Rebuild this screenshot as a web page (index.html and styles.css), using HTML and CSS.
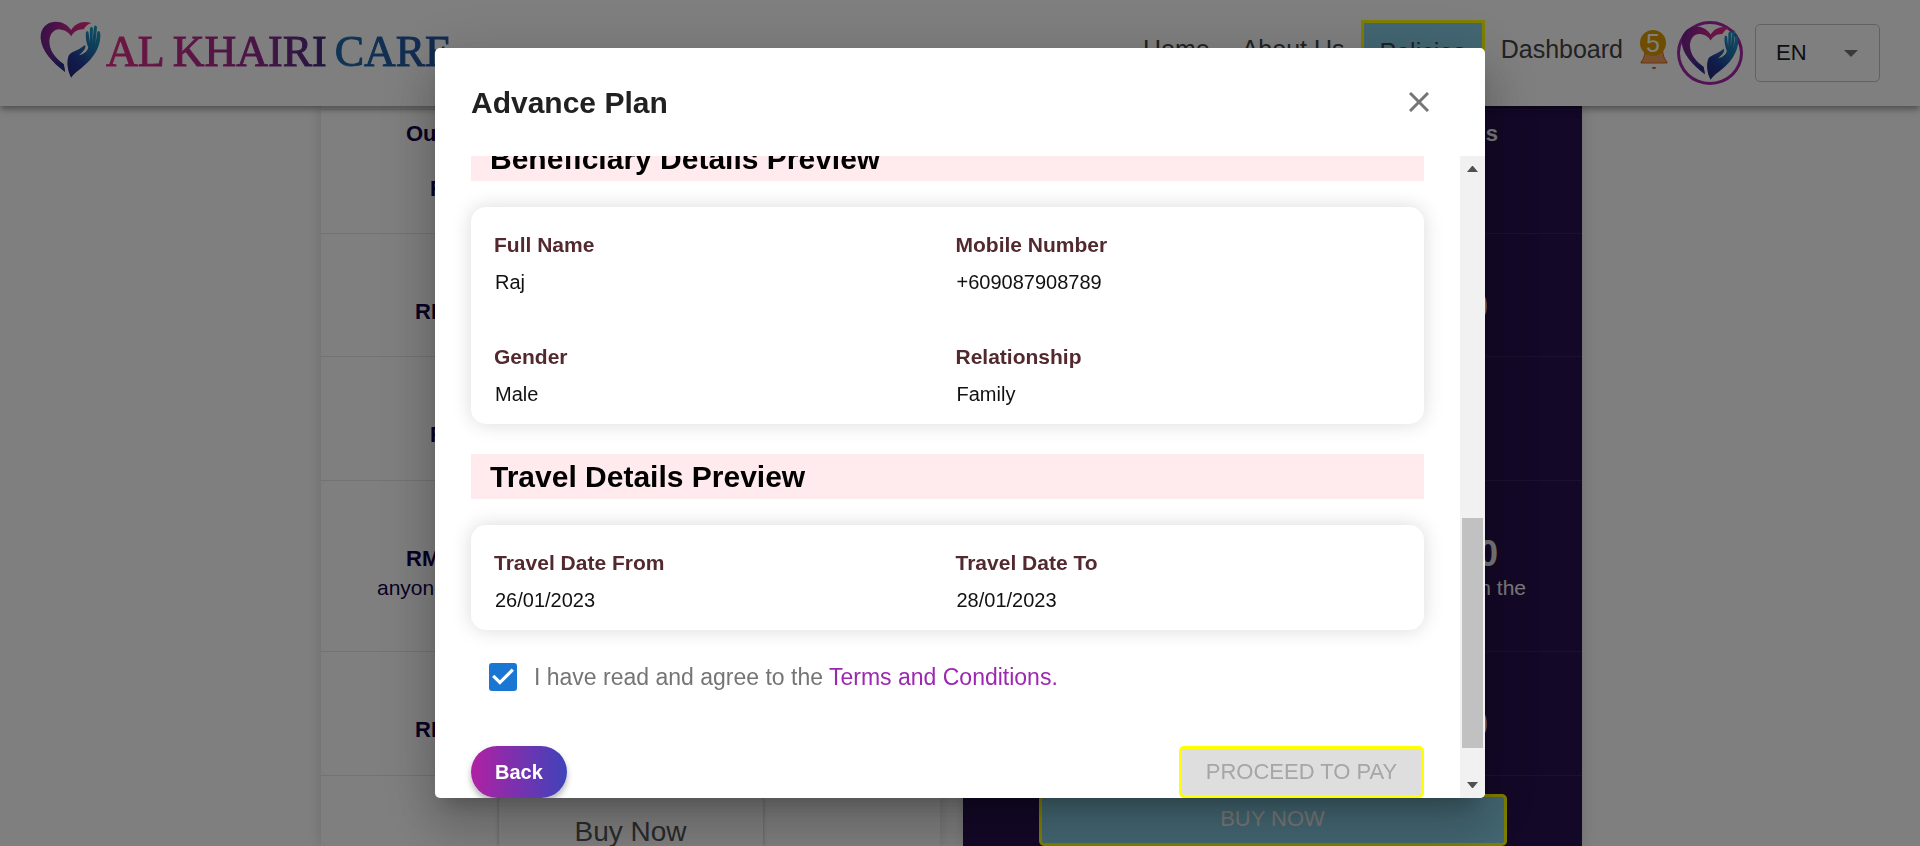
FILE: index.html
```html
<!DOCTYPE html>
<html lang="en">
<head>
<meta charset="utf-8">
<title>Al Khairi Care</title>
<link rel="stylesheet" href="styles.css">
</head>
<body>
<svg class="sprite" aria-hidden="true">
  <defs>
    <linearGradient id="heartFill" x1="0" y1="0.2" x2="1" y2="0.5">
      <stop offset="0" stop-color="#6a2390"/>
      <stop offset="0.35" stop-color="#b02590"/>
      <stop offset="0.8" stop-color="#e62a86"/>
    </linearGradient>
    <linearGradient id="heartLow" x1="0" y1="0" x2="0.4" y2="1">
      <stop offset="0.3" stop-color="#3a2a8c" stop-opacity="0"/>
      <stop offset="1" stop-color="#25308c"/>
    </linearGradient>
    <linearGradient id="handFill" x1="0.8" y1="0" x2="0.2" y2="1">
      <stop offset="0" stop-color="#1b9cc4"/>
      <stop offset="0.4" stop-color="#1f6fae"/>
      <stop offset="0.7" stop-color="#233a98"/>
      <stop offset="1" stop-color="#232a7c"/>
    </linearGradient>
    <symbol id="heart" viewBox="30 19 182 170">
      <path fill="url(#heartFill)" d="M123 46C112 29 94 20 75 21C48 22 30 43 32 71C35 108 65 140 105 171L101 148C72 128 57 104 58 78C60 55 73 43 89 44C105 45 117 53 123 65C130 52 142 43 160 44C166 34 174 27 184 26C160 16 135 25 123 46Z"/>
      <path fill="url(#heartLow)" d="M32 71C35 108 65 140 105 171L101 148C72 128 57 104 58 78C50 90 42 60 60 25C42 30 30 50 32 71Z"/>
      <path fill="url(#handFill)" d="M123 188C112 168 108 140 116 121C123 110 147 106 162 92C166 90 167 96 164 102C160 110 152 115 147 121C161 118 172 109 174 98C169 86 165 68 167 53C168 48 174 49 175 54L178 84L179 42C180 35 187 35 188 42L186 84L191 36C193 30 200 32 200 39L195 88L201 52C203 46 210 48 210 58C212 105 180 139 149 163C138 171 130 178 123 188Z"/>
    </symbol>
  </defs>
</svg>

<header class="topbar">
  <a class="brand" href="#">
    <svg class="brand-mark" aria-hidden="true"><use href="#heart"/></svg>
    <span class="brand-name">
      <span class="word word-al">AL</span>
      <span class="word word-khairi">KHAIRI</span>
      <span class="word word-care">CARE</span>
    </span>
  </a>
  <nav class="nav">
    <a href="#">Home</a>
    <a href="#">About Us</a>
    <a href="#" class="active">Policies</a>
    <a href="#">Dashboard</a>
  </nav>
  <button class="bell" type="button" aria-label="Notifications">
    <svg viewBox="0 0 28 40" aria-hidden="true">
      <path d="M5 16H22C23 24 23 27 27 32V33H1V32C5 27 5 24 5 16Z" fill="#f0a05c" stroke="#d9651c"/>
      <path d="M12 37H16C16 40 12 40 12 37Z" fill="#d9651c"/>
    </svg>
    <span class="badge">5</span>
  </button>
  <a class="avatar" href="#" aria-label="Profile"><svg aria-hidden="true"><use href="#heart"/></svg></a>
  <div class="lang">
    <select aria-label="Language"><option>EN</option></select>
    <svg class="caret" viewBox="0 0 14 7" aria-hidden="true"><path d="M0 0H14L7 7Z"/></svg>
  </div>
</header>

<main class="plans">
  <section class="plan plan-light">
    <div class="row row-first"><p class="name indent-m">Ou</p><p class="name indent-l">R</p></div>
    <div class="row row-short"><p class="name indent-n">RM</p></div>
    <div class="row"><p class="name indent-l">R</p></div>
    <div class="row row-tall"><p class="name indent-m">RM</p><p class="note indent-s">anyone</p></div>
    <div class="row"><p class="name indent-n">RM</p></div>
    <div class="row row-action"><button class="buy-light" type="button">Buy Now</button></div>
  </section>
  <section class="plan plan-dark">
    <div class="row row-first"><p class="name end-m">s</p></div>
    <div class="row row-short"><p class="price end-l">0</p></div>
    <div class="row"></div>
    <div class="row row-tall"><p class="price end-m">0</p><p class="note end-s">on the</p></div>
    <div class="row"><p class="price end-l">0</p></div>
    <div class="row row-action"><button class="buy-dark" type="button">BUY NOW</button></div>
  </section>
</main>

<div class="backdrop">
  <div class="dialog" role="dialog" aria-modal="true" aria-labelledby="dialog-title">
    <div class="dialog-head">
      <h2 id="dialog-title">Advance Plan</h2>
      <button class="close" type="button" aria-label="Close">
        <svg viewBox="0 0 20 20" aria-hidden="true"><path d="M1 1L19 19M19 1L1 19"/></svg>
      </button>
    </div>
    <div class="dialog-body">
      <div class="scroll">
        <h3 class="band">Beneficiary Details Preview</h3>
        <dl class="card">
          <div><dt>Full Name</dt><dd>Raj</dd></div>
          <div><dt>Mobile Number</dt><dd>+609087908789</dd></div>
          <div><dt>Gender</dt><dd>Male</dd></div>
          <div><dt>Relationship</dt><dd>Family</dd></div>
        </dl>
        <h3 class="band">Travel Details Preview</h3>
        <dl class="card">
          <div><dt>Travel Date From</dt><dd>26/01/2023</dd></div>
          <div><dt>Travel Date To</dt><dd>28/01/2023</dd></div>
        </dl>
        <div class="agree">
          <input type="checkbox" id="agree" checked>
          <label for="agree">I have read and agree to the <a href="#">Terms and Conditions.</a></label>
        </div>
        <div class="actions">
          <button class="back" type="button">Back</button>
          <button class="pay" type="button" disabled>PROCEED TO PAY</button>
        </div>
      </div>
      <div class="scrollbar" aria-hidden="true">
        <svg viewBox="0 0 11 6"><path d="M0 6L5 0H6L11 6Z"/></svg>
        <div class="track"><div class="thumb"></div></div>
        <svg viewBox="0 0 11 6"><path d="M0 0H11L6 6H5Z"/></svg>
      </div>
    </div>
  </div>
</div>
</body>
</html>
```
FILE: styles.css
```css
* { box-sizing: border-box; }
html, body { height: 100%; }
body {
  margin: 0;
  overflow: hidden;
  background: #fff;
  font-family: "Liberation Sans", Arial, sans-serif;
}
h2, h3, p, dl, dd { margin: 0; }
a { color: inherit; text-decoration: none; }
button, select, input { font-family: inherit; }
button { cursor: pointer; }
.sprite { position: absolute; width: 0; height: 0; }

/* Top bar */
.topbar {
  position: relative;
  z-index: 1;
  display: flex;
  align-items: center;
  height: 106px;
  padding: 0 40px;
  background: #fff;
  box-shadow: 0 3px 5px -1px rgba(0,0,0,.2), 0 5px 6px rgba(0,0,0,.14), 0 1px 12px rgba(0,0,0,.12);
}
.brand { display: flex; align-items: center; gap: 5px; margin-right: auto; }
.brand-mark { width: 61px; height: 57px; margin-bottom: 8px; }
.brand-name {
  display: flex;
  gap: 8px;
  padding-bottom: 3px;
  font-family: "Liberation Serif", "Times New Roman", serif;
  font-size: 44px;
  line-height: 48px;
}
.word { background-clip: text; -webkit-background-clip: text; color: transparent; -webkit-text-stroke: 1px transparent; }
.word-al { background-image: linear-gradient(90deg, #e02b86, #c52a88); }
.word-khairi { background-image: linear-gradient(90deg, #c12a88, #8a2a8c 60%, #402a80); }
.word-care { background-image: linear-gradient(90deg, #1f6aa8, #2452a0); }
.nav { display: flex; align-items: center; font-size: 25px; line-height: 30px; color: #444; }
.nav a { padding: 16px; margin-bottom: 8px; }
.nav .active { padding: 14px 16px; margin-bottom: 2px; border: 3px solid #ff0; background: #87cee6; }
.bell {
  position: relative;
  width: 28px;
  height: 40px;
  margin: 0 9px 6px 1px;
  padding: 0;
  border: 0;
  background: none;
}
.bell svg { display: block; width: 28px; height: 40px; }
.badge {
  position: absolute;
  left: 0;
  top: 0;
  width: 26px;
  height: 26px;
  border-radius: 50%;
  background: #dc9a00;
  color: #fff;
  font-size: 25px;
  line-height: 26px;
  text-align: center;
}
.avatar {
  display: grid;
  place-items: center;
  width: 66px;
  height: 64px;
  margin-right: 12px;
  border: 3px solid #a528a8;
  border-radius: 50%;
}
.avatar svg { width: 58px; height: 54px; }
.lang { position: relative; }
.lang select {
  appearance: none;
  width: 125px;
  height: 58px;
  padding: 0 40px 2px 20px;
  border: 1px solid #c4c4c4;
  border-radius: 5px;
  background: #fff;
  color: #212121;
  font-size: 22px;
}
.caret { position: absolute; right: 22px; top: 26px; width: 14px; height: 7px; fill: #757575; pointer-events: none; }

/* Plan columns behind the dialog */
.plans {
  display: grid;
  grid-template-columns: 1fr 1fr;
  gap: 23px;
  max-width: 1261px;
  margin: 0 auto;
}
@media (min-width: 1400px) { .plans { margin-left: calc(50% - 639px); } }
.plan { padding-top: 3px; box-shadow: 0 0 14px rgba(0,0,0,.16); }
.row { min-height: 124px; padding-top: 63px; border-top: 1px solid #e6e6e6; }
.row-first { padding-top: 9px; }
.row-first .name + .name { margin-top: 25px; }
.row-short { min-height: 123px; }
.row-tall { min-height: 171px; }
.name { font-size: 22px; font-weight: bold; line-height: 30px; }
.note { font-size: 21px; line-height: 28px; }
.price { height: 30px; font-size: 36px; font-weight: bold; line-height: 20px; }
.plan-light { color: #12004a; background: #fff; }
.indent-s { padding-left: 56px; }
.indent-m { padding-left: 85px; }
.indent-n { padding-left: 94px; }
.indent-l { padding-left: 109px; }
.plan-dark { color: #f5f5f5; background: #27104f; text-align: right; }
.plan-dark .row { border-color: rgba(255,255,255,.08); }
.end-s { padding-right: 56px; }
.end-m { padding-right: 84px; }
.end-l { padding-right: 94px; }
.row-action { display: flex; justify-content: center; min-height: 0; padding-top: 18px; }
.buy-light {
  width: 264px;
  height: 49px;
  margin-top: 3px;
  padding: 20px 0 0;
  border: 0;
  border-radius: 5px 5px 0 0;
  background: #fff;
  box-shadow: 0 0 4px rgba(0,0,0,.3);
  color: #555;
  font-size: 28px;
  line-height: 29px;
}
.buy-dark {
  width: 468px;
  height: 52px;
  padding: 0 0 3px;
  border: 3px solid #ff0;
  border-radius: 5px;
  background: #87cee6;
  color: #f5f0f0;
  font-size: 22px;
}

/* Dialog */
.backdrop {
  position: fixed;
  inset: 0;
  z-index: 2;
  display: flex;
  justify-content: center;
  padding: 48px;
  background: rgba(0,0,0,.5);
}
.dialog {
  display: flex;
  flex-direction: column;
  width: 100%;
  max-width: 1050px;
  overflow: hidden;
  border-radius: 5px;
  background: #fff;
  box-shadow: 0 14px 19px -9px rgba(0,0,0,.2), 0 30px 48px 4px rgba(0,0,0,.14), 0 11px 58px 10px rgba(0,0,0,.12);
}
.dialog-head {
  display: flex;
  align-items: center;
  justify-content: space-between;
  padding: 32px 56px 31px 36px;
}
.dialog-head h2 { color: #212121; font-size: 30px; line-height: 45px; }
.close { width: 20px; height: 20px; margin-bottom: 2px; padding: 0; border: 0; background: none; }
.close svg { display: block; width: 20px; height: 20px; fill: none; stroke: #757575; stroke-width: 3; }
.dialog-body { display: flex; flex: 1; min-height: 0; }
.scroll {
  display: flex;
  flex: 1;
  flex-direction: column;
  justify-content: flex-end;
  overflow: hidden;
  padding: 0 36px;
}
.band {
  flex: none;
  padding-left: 19px;
  background: #ffebee;
  color: #000;
  font-size: 30px;
  line-height: 45px;
}
.card {
  display: grid;
  flex: none;
  grid-template-columns: 1fr 1fr;
  gap: 45px 16px;
  margin: 26px 0 30px;
  padding: 23px 23px 15px;
  border-radius: 15px;
  background: #fff;
  box-shadow: 0 0 20px rgba(0,0,0,.15);
}
.card dt { color: #52292f; font-size: 21px; font-weight: bold; line-height: 30px; }
.card dd { margin-top: 7px; padding-left: 1px; color: #111; font-size: 20px; line-height: 30px; }
.agree { display: flex; flex: none; align-items: center; gap: 17px; padding: 0 18px; color: #757575; font-size: 23px; line-height: 34px; }
.agree a { color: #9c27b0; }
.agree input { appearance: none; width: 28px; height: 28px; margin: 0; border-radius: 3px; background: #1976d2; }
.agree input::before {
  content: "";
  display: block;
  height: 100%;
  background: #fff;
  clip-path: polygon(39% 78%, 11% 50%, 19% 42%, 39% 62%, 81% 20%, 89% 28%);
}
.actions { display: flex; flex: none; justify-content: space-between; margin-top: 52px; }
.back {
  height: 52px;
  padding: 0 24px;
  border: 0;
  border-radius: 26px;
  background: linear-gradient(90deg, #b021a3, #3f43bb);
  box-shadow: 0 4px 6px rgba(0,0,0,.3);
  color: #fff;
  font-size: 20px;
  font-weight: bold;
}
.pay {
  min-width: 245px;
  height: 52px;
  border: 3px solid #ff0;
  border-radius: 5px;
  background: #dedede;
  color: #a6a6a6;
  font-size: 22px;
}
.scrollbar {
  display: flex;
  flex-direction: column;
  align-items: center;
  width: 25px;
  padding: 10px 0;
  background: #f1f1f1;
}
.scrollbar svg { width: 11px; height: 6px; fill: #505050; }
.track { display: flex; flex: 1; flex-direction: column; justify-content: flex-end; width: 21px; padding-bottom: 34px; }
.thumb { height: 40%; background: #c1c1c1; }
```
